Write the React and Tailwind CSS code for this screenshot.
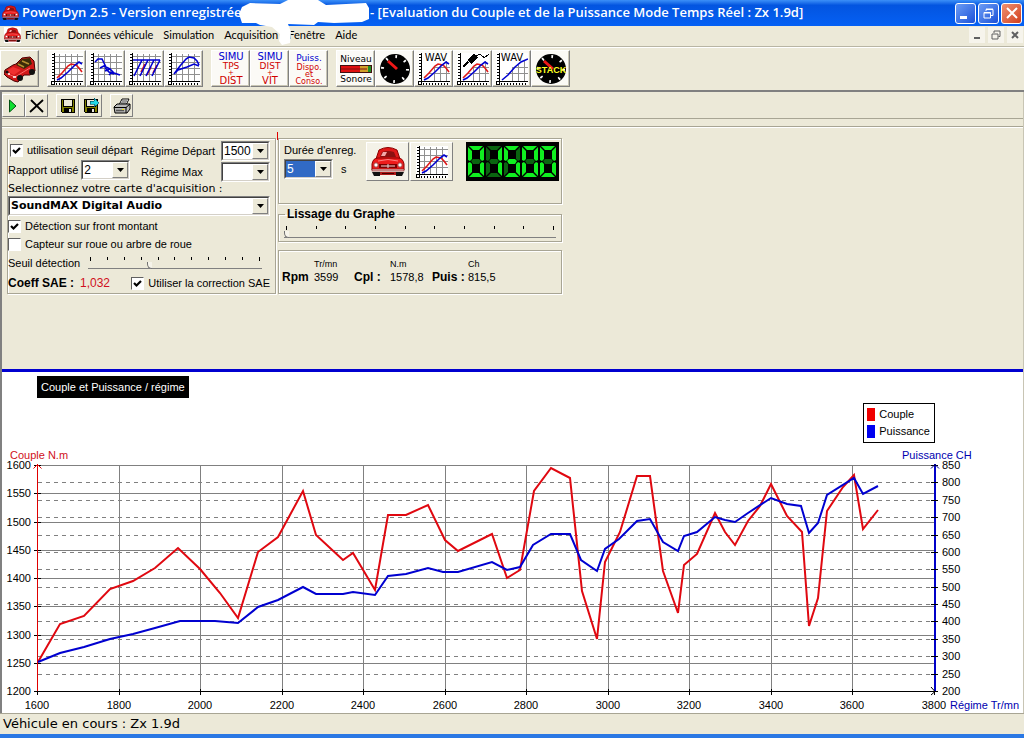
import React, { useState } from "react";

const menuItems = ["Fichier", "Données véhicule", "Simulation", "Acquisition", "Fenêtre", "Aide"];

const torquePoints =
  "38,662 60,624 84,616 110,589 133,581 155,568 178,548 200,569 220,593 238,618 258,552 278,537 303,491 316,535 343,560 353,553 375,590 388,515 406,515 428,505 445,540 458,551 492,534 507,578 520,570 534,491 551,468 570,478 582,591 597,639 605,562 620,532 637,476 650,476 663,571 678,613 684,565 697,554 715,513 725,532 735,545 748,521 760,506 771,484 787,516 802,532 809,626 818,598 827,511 843,487 854,475 863,529 878,510";

const powerPoints =
  "38,662 60,653 84,647 110,639 133,634 155,628 180,621 215,621 238,623 258,607 278,600 303,587 316,594 343,594 353,592 375,595 388,576 406,574 428,568 443,572 458,572 492,562 507,570 520,567 533,545 551,534 570,534 581,560 597,571 605,549 619,539 637,521 650,519 663,542 678,551 684,536 697,532 715,517 725,520 735,522 748,513 771,498 787,504 801,506 809,533 818,523 827,495 854,478 863,494 878,486";

const rpmTicks = [1600, 1800, 2000, 2200, 2400, 2600, 2800, 3000, 3200, 3400, 3600, 3800];
const torqueTicks = [1600, 1550, 1500, 1450, 1400, 1350, 1300, 1250, 1200];
const powerTicks = [850, 800, 750, 700, 650, 600, 550, 500, 450, 400, 350, 300, 250, 200];

const rpmX = (v) => Math.round(38 + ((v - 1600) / 2200) * 897);
const torqueY = (v) => Math.round(691 - ((v - 1200) / 400) * 226);
const powerY = (v) => Math.round(691 - ((v - 200) / 650) * 226);

/* ---------- icons ---------- */

const CarFront = ({ className }) => (
  <svg viewBox="0 0 34 30" className={className} aria-hidden="true">
    <path d="M5 12 L8 3 Q17 -2 26 3 L29 12 Z" fill="#e01818" stroke="#8c0000" />
    <path d="M9 10 L11 5 Q17 3 23 5 L25 10 Z" fill="#8c1010" />
    <path d="M10 9 L12 5 L16 5 L14 9 Z" fill="#f4a8a8" />
    <path d="M1 17 Q2 11 7 11 H27 Q32 11 33 17 V23 H1 Z" fill="#ee1c1c" stroke="#8c0000" />
    <path d="M7 14 Q17 11 27 14" stroke="#ff8080" fill="none" />
    <rect x="8" y="17" width="18" height="4" fill="#7a0000" />
    <path d="M10 19 H24 M17 17 V21" stroke="#e8d8d8" />
    <circle cx="5" cy="18" r="2.2" fill="#fff" stroke="#a04040" />
    <circle cx="29" cy="18" r="2.2" fill="#fff" stroke="#a04040" />
    <rect x="1" y="22" width="32" height="2" fill="#e8b0b0" stroke="#801818" strokeWidth=".6" />
    <path d="M1 25 H9 V29 H3 Z M25 25 H33 L31 29 H25 Z" fill="#111" />
    <path d="M9 25 H25 V28 H9 Z" fill="#b01818" />
    <path d="M11 26.5 H23" stroke="#400" />
  </svg>
);

const RedCar = () => (
  <svg viewBox="0 0 32 32" className="size-8" aria-hidden="true">
    <path d="M1 17 L9 12 L12 11 L18 5 L26 4 L30 8 L31 18 L26 22 L20 22 L14 29 L10 28 L3 24 L0 21 Z" fill="#d01818" stroke="#4a0000" />
    <path d="M12 12 L18 6 L26 5 L28 11 L20 16 Z" fill="#3a2a08" />
    <path d="M14 11 L20 14 M18 8 L25 11" stroke="#b89030" strokeWidth="1.6" />
    <path d="M2 18 L9 14 L17 17 L10 22 Z" fill="#f03030" />
    <path d="M2 20 L11 24 L26 15" stroke="#ff6a6a" fill="none" />
    <circle cx="16" cy="25" r="3" fill="#111" />
    <circle cx="28" cy="19" r="3" fill="#111" />
    <circle cx="3" cy="19" r="1.600" fill="#111" />
    <path d="M4 21 H6 M9 24 H12" stroke="#fff" strokeWidth="1.600" />
  </svg>
);

const GridIcon = ({ children, half }) => (
  <svg viewBox="0 0 32 32" className="size-8" shapeRendering="crispEdges" aria-hidden="true">
    <rect width="32" height="32" fill="#fff" />
    <path
      d={half ? "M10 20.5H32 M17 14.5H32 M16.5 14V29 M22.5 12V29 M28.5 8V29" : "M3 3.5H32 M3 9.5H32 M3 15.5H32 M3 21.5H32 M8.5 1V29 M14.5 1V29 M20.5 1V29 M26.5 1V29"}
      stroke="#909090"
      fill="none"
    />
    <path d="M3.5 0V29 M3 28.5H32" stroke="#000" fill="none" />
    <path d="M1.5 1V29" stroke="#000" strokeWidth="2" strokeDasharray="1 2" />
    <path d="M5 30.5H32" stroke="#000" strokeWidth="2" strokeDasharray="1 2" />
    <rect x="0.5" y="28.5" width="3" height="3" fill="none" stroke="#000" />
    {children}
  </svg>
);

const Curve = ({ d, color = "#0000d0" }) => (
  <path d={d} fill="none" stroke={color} strokeWidth="1.6" shapeRendering="auto" />
);

const DualGrid = ({ half, children }) => (
  <GridIcon half={half}>
    <Curve color="#e01818" d="M6 25 L11 20 L17 13 L20 11 L25 12 L28 15 L31 19" />
    <Curve d="M6 27 L10 25 L17 19 L24 12 L28 9 L31 11" />
    {children}
  </GridIcon>
);

const IconText = ({ x = 16, y, fill = "#000", size = 10, children }) => (
  <text x={x} y={y} fill={fill} fontSize={size} textAnchor="middle" fontFamily="'DejaVu Sans', sans-serif">
    {children}
  </text>
);

const Dial = ({ children }) => (
  <svg viewBox="0 0 32 32" className="size-8" aria-hidden="true">
    <circle cx="16" cy="16" r="15" fill="#000" />
    <circle cx="16" cy="16" r="12.500" fill="none" stroke="#fff" strokeWidth="3" strokeDasharray="1.7 8.12" />
    <path d="M9 8 L18 16" stroke="#f01818" strokeWidth="3" />
    {children}
  </svg>
);

const TextIcon = ({ children }) => (
  <svg viewBox="0 0 32 32" className="size-8 overflow-visible" aria-hidden="true">
    {children}
  </svg>
);

const Disk = ({ arrow }) => (
  <svg viewBox="0 0 16 16" className="size-4" shapeRendering="crispEdges" aria-hidden="true">
    <path d="M1.5 1.5H14.5V14.5H2.5L1.5 13.5Z" fill="#808000" stroke="#000" />
    <rect x="4" y="2" width="8" height="6" fill="#ece9d8" />
    <path d="M3.5 2V8.5H12.5V2" stroke="#000" fill="none" />
    <rect x="4" y="10" width="8" height="4" fill="#000" />
    <rect x="9" y="11" width="2" height="3" fill="#e8e8e0" />
    {arrow && <path d="M7 3H11V0L16 5L11 9V6H7Z" fill="#20d8e8" stroke="#004858" strokeWidth=".6" />}
  </svg>
);

const Printer = () => (
  <svg viewBox="0 0 18 16" className="h-4 w-[18px]" aria-hidden="true">
    <path d="M6 7 L9 1 H16 L13 7 Z" fill="#fff" stroke="#000" />
    <path d="M9 3H14 M8 5H13" stroke="#000" strokeWidth=".8" />
    <path d="M1 9 L4 6 H17 V11 L14 15 H2 Z" fill="#b8b8b8" stroke="#000" />
    <path d="M1 9.500H13 L17 6 M13 9V15" stroke="#000" fill="none" />
    <path d="M3 12.500H11" stroke="#555" strokeWidth="1.500" />
    <rect x="9" y="11" width="2" height="1" fill="#e8e000" />
  </svg>
);

const toolGroups = [
  [{ name: "Véhicule", icon: <RedCar /> }],
  [
    { name: "Couple et puissance", icon: <DualGrid /> },
    {
      name: "Décélération",
      icon: (
        <GridIcon>
          <Curve d="M5 9 L8 6 L12 6 L14 10 L16 14 M10 15 L14 13 L20 16 M15 18 L20 16 L24 20 L30 22 M15 15 L19 19 L24 21 M19 22 L23 18" />
        </GridIcon>
      ),
    },
    {
      name: "Rapports",
      icon: (
        <GridIcon>
          <Curve color="#e01818" d="M12 19 L16 11 M18 22 L22 14 M24 20 L28 12" />
          <Curve d="M4 7 H31 M5 23 L13 7 M11 23 L19 7 M17 23 L25 7 M23 23 L31 7" />
        </GridIcon>
      ),
    },
    {
      name: "Courbes",
      icon: (
        <GridIcon>
          <Curve d="M6 21 L12 13 L18 6 L21 4 L26 5 L29 8 L31 12 M6 21 L10 17 L19 14 L26 11 L31 13" />
        </GridIcon>
      ),
    },
  ],
  [
    {
      name: "Simulation temps distance",
      icon: (
        <TextIcon>
          <IconText y="7" fill="#0000d0">SIMU</IconText>
          <IconText y="16" size="9" fill="#d00000">TPS</IconText>
          <IconText y="22" size="7" fill="#d00000">+</IconText>
          <IconText y="31" fill="#d00000">DIST</IconText>
        </TextIcon>
      ),
    },
    {
      name: "Simulation distance vitesse",
      icon: (
        <TextIcon>
          <IconText y="7" fill="#0000d0">SIMU</IconText>
          <IconText y="16" size="9" fill="#d00000">DIST</IconText>
          <IconText y="22" size="7" fill="#d00000">+</IconText>
          <IconText y="31" fill="#d00000">VIT</IconText>
        </TextIcon>
      ),
    },
    {
      name: "Puissance disponible et consommée",
      icon: (
        <TextIcon>
          <IconText y="8" size="9" fill="#0000d0">Puiss.</IconText>
          <IconText y="17" size="8" fill="#d00000">Dispo.</IconText>
          <IconText y="24" size="8" fill="#d00000">et</IconText>
          <IconText y="31" size="8" fill="#d00000">Conso.</IconText>
        </TextIcon>
      ),
    },
  ],
  [
    {
      name: "Niveau sonore",
      icon: (
        <TextIcon>
          <IconText y="9" size="9">Niveau</IconText>
          <rect x="0" y="12" width="32" height="8" fill="#e01010" />
          <rect x="20" y="12" width="8" height="8" fill="#d0a028" />
          <rect x="28" y="12" width="4" height="8" fill="#209020" />
          <path d="M0 16H27" stroke="#801010" />
          <rect x="0.5" y="12.5" width="31" height="7" fill="none" stroke="#401010" />
          <IconText y="29" size="9">Sonore</IconText>
        </TextIcon>
      ),
    },
    { name: "Compte-tours", icon: <Dial /> },
    {
      name: "Wav couple puissance",
      icon: (
        <DualGrid half>
          <IconText x="18" y="8">WAV</IconText>
        </DualGrid>
      ),
    },
    {
      name: "Acquisition jack",
      icon: (
        <DualGrid half>
          <path d="M6 14 L11 9" stroke="#000" strokeWidth="2" />
          <path d="M10 7 L17 1 L21 5 L14 11 Z" fill="#000" />
          <path d="M19 3 Q23 0 25 3 T32 1" stroke="#000" fill="none" />
        </DualGrid>
      ),
    },
    {
      name: "Wav vitesse",
      icon: (
        <GridIcon half>
          <Curve d="M6 27 L12 22 L19 14 L25 9 L32 6" />
          <IconText x="16" y="8">WAV</IconText>
        </GridIcon>
      ),
    },
    {
      name: "Stack",
      icon: (
        <Dial>
          <text x="16" y="20" fill="#ffff20" fontSize="9" fontWeight="bold" textAnchor="middle" fontFamily="'Liberation Sans', sans-serif">
            STACK
          </text>
        </Dial>
      ),
    },
  ],
];

const smallGroups = [
  [
    {
      name: "Démarrer",
      icon: (
        <svg viewBox="0 0 16 16" className="size-4" aria-hidden="true">
          <path d="M3.500 2 L10 8 L3.500 14 Z" fill="#10e030" stroke="#005010" />
        </svg>
      ),
    },
    {
      name: "Effacer",
      icon: (
        <svg viewBox="0 0 16 16" className="size-4" aria-hidden="true">
          <path d="M2 2 L14 14 M14 2 L1 14" stroke="#000" strokeWidth="1.800" />
        </svg>
      ),
    },
  ],
  [
    { name: "Enregistrer", icon: <Disk /> },
    { name: "Enregistrer sous", icon: <Disk arrow /> },
  ],
  [{ name: "Imprimer", icon: <Printer /> }],
];

/* ---------- controls ---------- */

const ToolButton = ({ name, icon, white }) => (
  <button
    aria-label={name}
    className={`flex h-[37px] w-[39px] items-center justify-center border border-t-white border-l-white border-r-[#808080] border-b-[#808080] shadow-[inset_-1px_-1px_0_#c8c5b4] ${
      white ? "bg-[#fbfaf6]" : "bg-[#ece9d8]"
    }`}
  >
    {icon}
  </button>
);

const Combo = ({ id, label, value, className = "", selected, bold }) => (
  <div className={`relative h-5 border border-t-[#808080] border-l-[#808080] border-r-white border-b-white bg-white ${className}`}>
    <select
      id={id}
      aria-label={label}
      defaultValue={value}
      className={`block h-full w-full appearance-none border border-t-[#404040] border-l-[#404040] border-r-[#d4d0c8] border-b-[#d4d0c8] pl-px outline-none ${
        selected ? "bg-[#316ac5] text-white" : "bg-white text-black"
      } ${bold ? "font-['DejaVu_Sans',sans-serif] text-[11px] font-bold" : "text-xs"}`}
    >
      <option value={value}>{value}</option>
    </select>
    <span className="pointer-events-none absolute inset-y-px right-px flex w-4 items-center justify-center border border-t-white border-l-white border-r-[#808080] border-b-[#808080] bg-[#ece9d8]">
      <svg viewBox="0 0 7 4" className="h-1 w-[7px]" aria-hidden="true">
        <path d="M0 0H7L3.500 4Z" fill="#000" />
      </svg>
    </span>
  </div>
);

const Check = ({ label, initial = false, gap = "gap-1" }) => {
  const [checked, setChecked] = useState(initial);
  return (
    <label className={`flex items-center whitespace-nowrap ${gap}`}>
      <span className="grid size-[13px] shrink-0">
        <input
          type="checkbox"
          checked={checked}
          onChange={() => setChecked(!checked)}
          className="col-start-1 row-start-1 size-[13px] appearance-none border border-t-[#606060] border-l-[#606060] border-r-white border-b-white bg-white"
        />
        {checked && (
          <svg viewBox="0 0 13 13" className="pointer-events-none col-start-1 row-start-1 size-[13px]" aria-hidden="true">
            <path d="M3 6 L5.500 8.500 L10 4" stroke="#000" strokeWidth="2.200" fill="none" />
          </svg>
        )}
      </span>
      {label}
    </label>
  );
};

const Slider = ({ label, ticks, max, value, className = "" }) => (
  <div className={className}>
    <div className="flex h-1 justify-between px-0.5">
      {Array.from({ length: ticks }, (_, i) => (
        <span key={i} className={`w-px bg-black ${i === 0 || i === ticks - 1 ? "h-1" : "h-[3px]"}`}></span>
      ))}
    </div>
    <input
      type="range"
      aria-label={label}
      min="0"
      max={max}
      step="0.5"
      defaultValue={value}
      className="block h-2 w-full appearance-none bg-transparent [&::-webkit-slider-runnable-track]:h-[7px] [&::-webkit-slider-runnable-track]:border-b [&::-webkit-slider-runnable-track]:border-[#808080] [&::-webkit-slider-thumb]:h-[7px] [&::-webkit-slider-thumb]:w-[5px] [&::-webkit-slider-thumb]:appearance-none [&::-webkit-slider-thumb]:rounded-bl-full [&::-webkit-slider-thumb]:border-l [&::-webkit-slider-thumb]:border-b [&::-webkit-slider-thumb]:border-[#707070] [&::-webkit-slider-thumb]:bg-[#f6f4ea]"
    />
  </div>
);

const segments = {
  a: "1,0 15,0 11,4 5,4",
  b: "16,1 16,14 14,15 12,13 12,5",
  c: "16,30 16,17 14,16 12,18 12,26",
  d: "1,31 15,31 11,27 5,27",
  e: "0,30 0,17 2,16 4,18 4,26",
  f: "0,1 0,14 2,15 4,13 4,5",
  g: "3,15 5,13 11,13 13,15 11,18 5,18",
};
const digitMap = { 0: "abcdef", 1: "bc", 5: "afgcd" };

const Lcd = ({ value }) => (
  <svg viewBox="0 0 93 39" className="h-[39px] w-[93px] shrink-0 bg-black" role="img" aria-label={value}>
    {value.split("").map((digit, i) => (
      <g key={i} transform={`translate(${2 + i * 18} 4)`}>
        {Object.keys(segments).map((s) => (
          <polygon key={s} points={segments[s]} fill={digitMap[digit].includes(s) ? "#10f020" : "#0a6410"} />
        ))}
      </g>
    ))}
  </svg>
);

const box = "border border-[#a8a594] shadow-[1px_1px_0_#fff,inset_1px_1px_0_#fff]";

/* ---------- sections ---------- */

const TitleBar = () => (
  <header className="relative flex h-[26px] items-center bg-gradient-to-b from-[#3c90f8] via-[#0355e0] via-20% to-[#0560f4] px-0.5 font-['Open_Sans',sans-serif] text-[13px] font-semibold text-white">
    <CarFront className="h-4 w-[17px] shrink-0" />
    <h1 className="ml-[3px] w-[348px] shrink-0 whitespace-nowrap">PowerDyn 2.5 - Version enregistrée</h1>
    <span className="flex-1 truncate">- [Evaluation du Couple et de la Puissance Mode Temps Réel : Zx 1.9d]</span>
    <svg viewBox="0 0 140 47" className="absolute top-0 left-[234px] h-[47px] w-[140px]" aria-hidden="true">
      <path
        d="M5 14 L8 7 L16 3 L46 4 L54 0 H84 L92 5 L132 3 L135 8 V19 L128 22 L100 23 L84 22 L80 25 L54 24 L57 32 L56 43 L48 45 L45 41 L46 34 L38 27 L26 25 L22 23 L8 23 Z"
        fill="#fff"
      />
    </svg>
    <div className="flex gap-0.5">
      <button aria-label="Réduire" className="flex size-[21px] items-end justify-start rounded-[3px] border border-white bg-gradient-to-br from-[#6d9cf4] to-[#1c4fd8] p-1">
        <span className="h-[3px] w-[7px] bg-white"></span>
      </button>
      <button aria-label="Restaurer" className="flex size-[21px] items-center justify-center rounded-[3px] border border-white bg-gradient-to-br from-[#6d9cf4] to-[#1c4fd8]">
        <svg viewBox="0 0 11 11" className="size-[11px]" aria-hidden="true">
          <path d="M3 3V1.500H10V7.500H8 M3 1H10" stroke="#fff" fill="none" />
          <path d="M1 4.500H7.500V10H1Z M1 5H8" stroke="#fff" fill="none" />
        </svg>
      </button>
      <button aria-label="Fermer" className="flex size-[21px] items-center justify-center rounded-[3px] border border-white bg-gradient-to-br from-[#f09070] to-[#d03c18]">
        <svg viewBox="0 0 12 12" className="size-3" aria-hidden="true">
          <path d="M1 1L11 11M11 1L1 11" stroke="#fff" strokeWidth="2" />
        </svg>
      </button>
    </div>
  </header>
);

const MenuBar = () => (
  <nav className="flex h-[21px] items-center border-b border-[#b8b5a4] pr-px pb-0.5 pl-1 font-[Lato,sans-serif] text-[11px] shadow-[0_1px_0_#fff]">
    <CarFront className="mr-1 h-4 w-[17px] shrink-0 bg-white" />
    <div className="flex flex-1 gap-2.5">
      {menuItems.map((item) => (
        <button key={item} className="whitespace-nowrap">
          {item}
        </button>
      ))}
    </div>
    <div className="flex gap-[3px] text-[#606060]">
      <button aria-label="Réduire la fenêtre" className="flex size-4 items-center justify-center bg-[#f6f4ec]">
        <span className="mt-1.5 h-0.5 w-1.5 bg-[#606060]"></span>
      </button>
      <button aria-label="Restaurer la fenêtre" className="flex size-4 items-center justify-center bg-[#f6f4ec]">
        <svg viewBox="0 0 10 10" className="size-2.5" aria-hidden="true">
          <path d="M3 3V1H9V6.500H7.500 M1 4H7V9H1Z" stroke="#606060" fill="none" />
        </svg>
      </button>
      <button aria-label="Fermer la fenêtre" className="flex size-4 items-center justify-center bg-[#f6f4ec]">
        <svg viewBox="0 0 8 8" className="size-2" aria-hidden="true">
          <path d="M1 1L7 7M7 1L1 7" stroke="#606060" strokeWidth="2" />
        </svg>
      </button>
    </div>
  </nav>
);

const SettingsPanel = () => (
  <section className={`flex w-[269px] shrink-0 flex-col pt-0.5 pr-px ${box}`}>
    <div className="flex justify-between pr-1">
      <div className="flex flex-col">
        <div className="flex h-[19px] items-center pl-0.5">
          <Check label="utilisation seuil départ" initial />
        </div>
        <div className="flex items-center gap-[3px]">
          <label htmlFor="rapport">Rapport utilisé</label>
          <Combo id="rapport" value="2" className="w-[49px]" />
        </div>
      </div>
      <div className="flex flex-col gap-px">
        <div className="flex items-center justify-between gap-1.5">
          <label htmlFor="depart">Régime Départ</label>
          <Combo id="depart" value="1500" className="w-[49px]" />
        </div>
        <div className="flex items-center justify-between gap-1.5">
          <label htmlFor="max">Régime Max</label>
          <Combo id="max" value="" className="w-[49px]" />
        </div>
      </div>
    </div>
    <label htmlFor="carte" className="font-['DejaVu_Sans',sans-serif] text-[11px] leading-[14px]">
      Selectionnez votre carte d'acquisition :
    </label>
    <Combo id="carte" value="SoundMAX Digital Audio" bold className="mr-1" />
    <div className="mt-px flex h-[18px] items-center">
      <Check label="Détection sur front montant" initial />
    </div>
    <div className="flex h-[18px] items-center">
      <Check label="Capteur sur roue ou arbre de roue" />
    </div>
    <div className="flex h-5 items-center justify-between pr-3">
      <span>Seuil détection</span>
      <Slider label="Seuil détection" ticks={11} max="10" value="3.5" className="w-[174px]" />
    </div>
    <div className="flex h-5 items-center pr-1">
      <span className="text-xs font-bold">Coeff SAE :</span>
      <output className="ml-1.5 text-xs text-[#d01020]">1,032</output>
      <div className="ml-auto">
        <Check label="Utiliser la correction SAE" initial />
      </div>
    </div>
  </section>
);

const RecordPanel = () => (
  <div className="relative flex w-[284px] shrink-0 flex-col">
    <span className="absolute -top-1.5 -left-px h-2 w-px bg-[#e00000]"></span>
    <section className={`flex h-[66px] items-start pt-[3px] pr-0.5 pl-[5px] ${box}`}>
      <div>
        <label htmlFor="duree" className="block leading-[17px]">
          Durée d'enreg.
        </label>
        <div className="flex items-center gap-2">
          <Combo id="duree" value="5" selected className="w-[49px]" />
          <span>s</span>
        </div>
      </div>
      <div className="ml-auto flex gap-px">
        <button aria-label="Véhicule" className="flex h-[39px] w-[43px] items-center justify-center border border-t-white border-l-white border-r-[#808080] border-b-[#808080] bg-[#f4f2e8]">
          <CarFront className="h-[30px] w-[34px]" />
        </button>
        <button aria-label="Graphe" className="flex h-[39px] w-[43px] items-center justify-center border border-t-white border-l-white border-r-[#808080] border-b-[#808080] bg-[#f4f2e8]">
          <DualGrid />
        </button>
        <div className="pl-3">
          <Lcd value="01500" />
        </div>
      </div>
    </section>
    <fieldset className={`mt-[3px] px-[5px] pb-[3px] ${box}`}>
      <legend className="ml-px px-0.5 text-xs leading-[15px] font-bold">Lissage du Graphe</legend>
      <Slider label="Lissage du Graphe" ticks={10} max="9" value="0" className="mt-1 w-full" />
    </fieldset>
    <section className={`mt-2 flex h-11 items-end pb-2 pl-[3px] ${box}`}>
      <span className="w-8 text-xs font-bold">Rpm</span>
      <div className="w-10">
        <div className="text-[9px] leading-3">Tr/mn</div>
        <div className="leading-[15px]">3599</div>
      </div>
      <span className="w-9 text-xs font-bold">Cpl :</span>
      <div className="w-[42px]">
        <div className="text-[9px] leading-3">N.m</div>
        <div className="leading-[15px]">1578,8</div>
      </div>
      <span className="w-9 text-xs font-bold whitespace-nowrap">Puis :</span>
      <div>
        <div className="text-[9px] leading-3">Ch</div>
        <div className="leading-[15px]">815,5</div>
      </div>
    </section>
  </div>
);

const Chart = () => (
  <section className="flex-1 bg-white">
    <div className="flex h-[72px] items-start justify-between pr-[88px] pl-[35px]">
      <h2 className="mt-1 bg-black px-1 py-[3px] leading-4 text-white">Couple et Puissance / régime</h2>
      <ul className="mt-[31px] border border-black py-0.5 pr-1 pl-[3px] leading-[17px]">
        <li className="flex items-center gap-1">
          <span className="h-[13px] w-2 bg-[#f00000]"></span>Couple
        </li>
        <li className="flex items-center gap-1">
          <span className="h-[13px] w-2 bg-[#0000f0]"></span>Puissance
        </li>
      </ul>
    </div>
    <svg viewBox="2 444 1021 268" className="block w-full" fontSize="11" role="img" aria-label="Couple et Puissance / régime">
      <g shapeRendering="crispEdges" fill="none">
        {torqueTicks.map((v) => (
          <path key={v} d={`M38 ${torqueY(v) + 0.5}H935`} stroke="#808080" />
        ))}
        {powerTicks.map((v) => (
          <path key={v} d={`M38 ${powerY(v) + 0.5}H935`} stroke="#808080" strokeDasharray="4 4" />
        ))}
        {rpmTicks.slice(1).map((v) => (
          <path key={v} d={`M${rpmX(v) - 0.5} 465V691`} stroke="#808080" />
        ))}
        {rpmTicks.map((v) => (
          <path key={`t${v}`} d={`M${rpmX(v) - 0.5} 689V695`} stroke="#000" />
        ))}
        {torqueTicks.map((v) => (
          <path key={`q${v}`} d={`M34 ${torqueY(v) + 0.5}H41`} stroke="#000" />
        ))}
        <path d="M37 691.5H936" stroke="#000" />
        <path d="M37.5 464V691" stroke="#e00000" />
        <path d="M935 464V691" stroke="#0000c8" strokeWidth="2" />
        {powerTicks.map((v) => (
          <path key={`p${v}`} d={`M931 ${powerY(v) + 0.5}H938`} stroke="#000" />
        ))}
      </g>
      <path d="M33.500 468.500L37.500 464.500L41.500 468.500" stroke="#e00000" fill="none" />
      <path d="M931 468.500L935 464.500L939 468.500" stroke="#000080" fill="none" />
      <path d="M931 687L935 691.500L931 695" stroke="#000" fill="none" />
      <polyline points={torquePoints} fill="none" stroke="#e00810" strokeWidth="2" />
      <polyline points={powerPoints} fill="none" stroke="#0000d0" strokeWidth="2" />
      <text x="10" y="459" fill="#d01020">Couple N.m</text>
      <text x="902" y="459" fill="#0000b0">Puissance CH</text>
      {torqueTicks.map((v) => (
        <text key={v} x="31" y={torqueY(v) + 4} textAnchor="end">
          {v}
        </text>
      ))}
      {powerTicks.map((v) => (
        <text key={v} x="942" y={powerY(v) + 4}>
          {v}
        </text>
      ))}
      {rpmTicks.map((v) => (
        <text key={v} x={rpmX(v) - 1} y="709" textAnchor="middle">
          {v}
        </text>
      ))}
      <text x="950" y="709" fill="#0000b0">Régime Tr/mn</text>
    </svg>
  </section>
);

const App = () => {
  return (
    <div className="flex min-h-screen w-full flex-col bg-[#ece9d8] font-['Liberation_Sans',Arial,sans-serif] text-[11px] text-black">
      <TitleBar />
      <MenuBar />

      {/* Main toolbar */}
      <div className="flex gap-2 border-b-2 border-[#808080] pt-[3px] pb-[3px]">
        {toolGroups.map((group, i) => (
          <div key={i} className="flex">
            {group.map((tool) => (
              <ToolButton key={tool.name} {...tool} white={i > 0} />
            ))}
          </div>
        ))}
      </div>

      <main className="flex flex-1 flex-col border-r border-l-2 border-r-[#c8c5b4] border-l-[#808080]">
        {/* Document toolbar */}
        <div className="flex gap-2 border-b border-[#a8a594] pt-0.5 pb-px">
          {smallGroups.map((group, i) => (
            <div key={i} className="flex">
              {group.map((tool) => (
                <button
                  key={tool.name}
                  aria-label={tool.name}
                  className="flex h-[23px] w-[23px] items-center justify-center border border-t-white border-l-white border-r-[#808080] border-b-[#808080]"
                >
                  {tool.icon}
                </button>
              ))}
            </div>
          ))}
        </div>

        <div className="mt-[7px] flex h-[243px] items-start gap-0.5 border-t border-[#a8a594] pt-[11px] pl-[5px] shadow-[inset_0_1px_0_#fff]">
          <SettingsPanel />
          <RecordPanel />
        </div>

        <div className="h-[3px] bg-[#0000d0]"></div>
        <Chart />
      </main>

      <footer className="border-t border-b-4 border-t-[#a8a594] border-b-[#2a78e4] px-[3px] font-['DejaVu_Sans',sans-serif] text-[13px] leading-5">
        Véhicule en cours : Zx 1.9d
      </footer>
    </div>
  );
};

export default App;
